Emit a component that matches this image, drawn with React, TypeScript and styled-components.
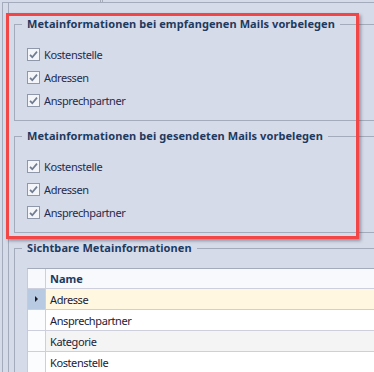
import React from "react";
import styled, { createGlobalStyle } from "styled-components";

const GlobalStyle = createGlobalStyle`
    html, body {
        margin: 0;
        padding: 0;
        background: #d6dbe9;
        overflow: hidden;
    }
    body {
        font-family: "Noto Sans", "Liberation Sans", sans-serif;
        font-size: 11px;
        color: #1e2d4f;
    }
`;

const LINE = "#a4abba";

const received = ["Kostenstelle", "Adressen", "Ansprechpartner"];
const sent = ["Kostenstelle", "Adressen", "Ansprechpartner"];
const rows = ["Adresse", "Ansprechpartner", "Kategorie", "Kostenstelle"];

const CheckItem = ({ label }: { label: string }) => (
    <Row>
        <Box>
            <svg width="11" height="11" viewBox="0 0 11 11">
                <path
                    d="M2 5.8 L4.3 8.2 L9 2.6"
                    fill="none"
                    stroke="#6f7c92"
                    strokeWidth="1.7"
                />
            </svg>
        </Box>
        <Label>{label}</Label>
    </Row>
);

const App = () => {
    return (
        <Screen>
            <GlobalStyle />
            <TabStrip>
                <TabEdge />
            </TabStrip>
            <Panel>
                <Inner>
                    <Group>
                        <Legend>Metainformationen bei empfangenen Mails vorbelegen</Legend>
                        <List>
                            {received.map((l) => (
                                <CheckItem key={l} label={l} />
                            ))}
                        </List>
                    </Group>
                    <Group $gap={7}>
                        <Legend>Metainformationen bei gesendeten Mails vorbelegen</Legend>
                        <List>
                            {sent.map((l) => (
                                <CheckItem key={l} label={l} />
                            ))}
                        </List>
                    </Group>
                    <Group $gap={7}>
                        <Legend>Sichtbare Metainformationen</Legend>
                        <Grid>
                            <GridRow $header>
                                <Indicator $header />
                                <HeadCell>Name</HeadCell>
                            </GridRow>
                            {rows.map((r, i) => (
                                <GridRow
                                    key={r}
                                    $selected={i === 0}
                                    $alt={i === 2}
                                >
                                    <Indicator $selected={i === 0}>
                                        {i === 0 && <Arrow />}
                                    </Indicator>
                                    <Cell>{r}</Cell>
                                </GridRow>
                            ))}
                        </Grid>
                    </Group>
                </Inner>
            </Panel>
            <Highlight />
        </Screen>
    );
};

export default App;

const Screen = styled.div`
    position: relative;
    width: 374px;
    height: 372px;
    overflow: hidden;
`;

const TabStrip = styled.div`
    height: 2px;
    display: flex;
`;

const TabEdge = styled.div`
    margin-left: 100px;
    width: 1px;
    border-left: 1px solid ${LINE};
    border-right: 1px solid ${LINE};
`;

const Panel = styled.div`
    margin-left: 2px;
    height: 400px;
    border-top: 1px solid ${LINE};
    border-left: 1px solid ${LINE};
    padding-left: 5px;
`;

const Inner = styled.div`
    height: 100%;
    border-left: 1px solid ${LINE};
    padding: 13px 0 0 5px;
`;

const Group = styled.fieldset<{ $gap?: number }>`
    margin: ${(p) => p.$gap || 0}px 0 0 0;
    padding: 0 0 8px 7px;
    border: 1px solid ${LINE};
    border-right: none;
    min-width: 0;
`;

const Legend = styled.legend`
    padding: 0 5px;
    font-weight: bold;
    line-height: 16px;
    letter-spacing: 0.08px;
    color: #1e3a5f;
    white-space: nowrap;
`;

const List = styled.div`
    margin-top: 11px;
    padding-left: 5px;
    display: flex;
    flex-direction: column;
`;

const Row = styled.div`
    height: 23px;
    display: flex;
    align-items: center;
`;

const Box = styled.div`
    width: 11px;
    height: 11px;
    border: 1px solid #8e98aa;
    background: #f4f5f8;
    display: flex;
    align-items: center;
    justify-content: center;
`;

const Label = styled.span`
    margin-left: 4px;
    line-height: 14px;
    letter-spacing: -0.4px;
`;

const Grid = styled.div`
    margin: 12px 0 0 5px;
    width: 400px;
    border-top: 1px solid ${LINE};
    border-left: 1px solid #c4cad8;
    background: #ffffff;
`;

const GridRow = styled.div<{ $header?: boolean; $selected?: boolean; $alt?: boolean }>`
    display: flex;
    height: 20px;
    border-bottom: 1px solid #cdd0dc;
    background: ${(p) =>
        p.$header ? "#f7f9fd" : p.$selected ? "#fff7df" : p.$alt ? "#f4f4f4" : "#ffffff"};
    ${(p) => p.$header && "height: 19px;"}
`;

const Indicator = styled.div<{ $header?: boolean; $selected?: boolean }>`
    width: 17px;
    flex: none;
    border-right: 1px solid #cdd0dc;
    background: ${(p) => (p.$selected ? "#b8cae2" : p.$header ? "#f7f9fd" : "#fbfcfe")};
    display: flex;
    align-items: center;
    justify-content: center;
`;

const Arrow = styled.span`
    width: 0;
    height: 0;
    border-left: 3px solid #1c1c24;
    border-top: 3px solid transparent;
    border-bottom: 3px solid transparent;
`;

const Cell = styled.div`
    padding-left: 4px;
    display: flex;
    align-items: center;
    letter-spacing: -0.4px;
    color: #1c2236;
`;

const HeadCell = styled(Cell)`
    font-weight: bold;
    letter-spacing: 0;
    color: #1e3a5f;
`;

const Highlight = styled.div`
    position: absolute;
    left: 6px;
    top: 13px;
    width: 353px;
    height: 226px;
    box-sizing: border-box;
    border: 3px solid #f24646;
    box-shadow: 2px 2px 3px rgba(60, 60, 80, 0.45);
    pointer-events: none;
`;
